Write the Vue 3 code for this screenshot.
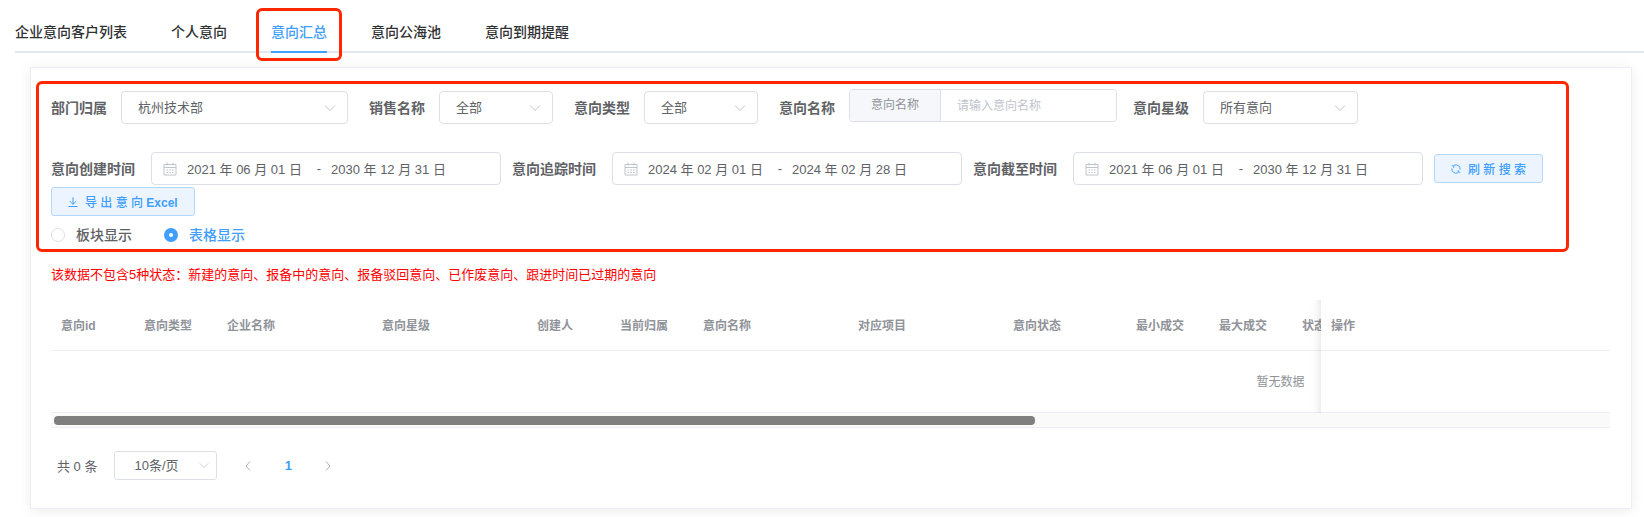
<script setup>
import { ref } from 'vue'

const tabs = ['企业意向客户列表', '个人意向', '意向汇总', '意向公海池', '意向到期提醒']
const activeTab = ref('意向汇总')

const selects = [
  { id: 'dept', label: '部门归属', value: '杭州技术部', size: 'wide' },
  { id: 'sales', label: '销售名称', value: '全部', size: 'narrow' },
  { id: 'type', label: '意向类型', value: '全部', size: 'narrow' }
]

const ranges = ref([
  { id: 'created', label: '意向创建时间', from: '2021 年 06 月 01 日', to: '2030 年 12 月 31 日' },
  { id: 'tracked', label: '意向追踪时间', from: '2024 年 02 月 01 日', to: '2024 年 02 月 28 日' },
  { id: 'deadline', label: '意向截至时间', from: '2021 年 06 月 01 日', to: '2030 年 12 月 31 日' }
])

const name = ref('')
const view = ref('table')

const columns = [
  { title: '意向id', size: 's' },
  { title: '意向类型', size: 's' },
  { title: '企业名称', size: 'l' },
  { title: '意向星级', size: 'l' },
  { title: '创建人', size: 's' },
  { title: '当前归属', size: 's' },
  { title: '意向名称', size: 'l' },
  { title: '对应项目', size: 'l' },
  { title: '意向状态', size: 'm' },
  { title: '最小成交', size: 's' },
  { title: '最大成交', size: 's' },
  { title: '状态', size: 's' }
]
</script>

<template>
  <div class="page">
    <nav class="tabs">
      <a
        v-for="t in tabs"
        :key="t"
        href="#"
        class="tab"
        :class="{ active: t === activeTab }"
        @click.prevent="activeTab = t"
      >{{ t }}<span v-if="t === '意向汇总'" class="mark"></span></a>
    </nav>

    <main class="card">
      <section class="filters">
        <div class="row first">
          <div v-for="s in selects" :key="s.id" class="field spaced">
            <label :for="s.id">{{ s.label }}</label>
            <div class="select" :class="s.size">
              <select :id="s.id"><option>{{ s.value }}</option></select>
              <svg class="arrow" width="12" height="8" viewBox="0 0 12 8"><path d="M1 1.5 6 6.5 11 1.5" /></svg>
            </div>
          </div>
          <div class="field">
            <label for="name">意向名称</label>
            <div class="group">
              <span class="prepend">意向名称</span>
              <input id="name" v-model="name" type="text" placeholder="请输入意向名称">
            </div>
          </div>
          <div class="field">
            <label for="star">意向星级</label>
            <div class="select medium">
              <select id="star"><option>所有意向</option></select>
              <svg class="arrow" width="12" height="8" viewBox="0 0 12 8"><path d="M1 1.5 6 6.5 11 1.5" /></svg>
            </div>
          </div>
        </div>

        <div class="row second">
          <div v-for="r in ranges" :key="r.id" class="field range-field">
            <label :for="r.id">{{ r.label }}</label>
            <div class="range">
              <svg class="calendar" width="14" height="14" viewBox="0 0 14 14">
                <path d="M1 2.5h12v10.5H1zM1 5.5h12M4 .5v3M10 .5v3" />
                <path d="M3.5 8h1.5M6.3 8h1.5M9 8h1.5M3.5 10.5h1.5M6.3 10.5h1.5M9 10.5h1.5" />
              </svg>
              <input :id="r.id" v-model="r.from" type="text">
              <span class="dash">-</span>
              <input v-model="r.to" type="text" :aria-label="r.label">
            </div>
          </div>
          <button type="button" class="btn">
            <svg width="10" height="10" viewBox="0 0 10 10">
              <path d="M3.2 1.2A4.2 4.2 0 0 1 9.1 5.6M6.8 8.8A4.2 4.2 0 0 1 .9 4.4M.8 1.8h2v2M9.2 8.2h-2v-2" />
            </svg>
            刷 新 搜 索
          </button>
          <button type="button" class="btn">
            <svg width="10" height="10" viewBox="0 0 10 10">
              <path d="M5 .3v7M1.8 4.2 5 7.3 8.2 4.2M.5 9.5h9" />
            </svg>
            <span>导 出 意 向 <b>Excel</b></span>
          </button>
        </div>

        <div class="views">
          <label class="radio" :class="{ on: view === 'board' }">
            <input v-model="view" type="radio" name="view" value="board">板块显示
          </label>
          <label class="radio" :class="{ on: view === 'table' }">
            <input v-model="view" type="radio" name="view" value="table">表格显示
          </label>
        </div>
      </section>

      <div class="body">
        <p class="notice">该数据不包含5种状态：新建的意向、报备中的意向、报备驳回意向、已作废意向、跟进时间已过期的意向</p>

        <div class="table-wrap">
          <table>
            <colgroup>
              <col v-for="c in columns" :key="c.title" :class="'col-' + c.size">
              <col>
              <col class="col-fixed">
            </colgroup>
            <thead>
              <tr>
                <th v-for="c in columns" :key="c.title">{{ c.title }}</th>
                <th></th>
                <th class="fixed">操作</th>
              </tr>
            </thead>
            <tbody>
              <tr>
                <td class="empty" :colspan="columns.length + 1">暂无数据</td>
                <td class="fixed"></td>
              </tr>
            </tbody>
          </table>
        </div>
        <div class="track"><div class="thumb"></div></div>

        <footer class="pager">
          <span>共 0 条</span>
          <div class="select page-size">
            <select aria-label="每页条数"><option>10条/页</option></select>
            <svg class="arrow" width="10" height="7" viewBox="0 0 12 8"><path d="M1 1.5 6 6.5 11 1.5" /></svg>
          </div>
          <div class="pages">
            <button type="button" aria-label="上一页">
              <svg width="8" height="12" viewBox="0 0 8 12"><path d="M6 1.5 2 6 6 10.5" /></svg>
            </button>
            <button type="button" class="current">1</button>
            <button type="button" aria-label="下一页">
              <svg width="8" height="12" viewBox="0 0 8 12"><path d="M2 1.5 6 6 2 10.5" /></svg>
            </button>
          </div>
        </footer>
      </div>
    </main>
  </div>
</template>

<style>
body {
  background: #fff;
}
</style>

<style scoped>
.page {
  font-family: "Liberation Sans", "Noto Sans CJK SC", sans-serif;
  font-size: 13px;
  color: #606266;
  overflow: hidden;
  padding-bottom: 8px;
}
.page * {
  box-sizing: border-box;
}
svg {
  fill: none;
  stroke: currentColor;
}
input,
select,
button {
  font: inherit;
  color: inherit;
  margin: 0;
}

.tabs {
  display: flex;
  gap: 44px;
  margin-left: 15px;
  padding-top: 13px;
  border-bottom: 2px solid #e4e7ed;
}
.tab {
  position: relative;
  font-size: 14px;
  font-weight: 500;
  line-height: 38px;
  color: #303133;
  text-decoration: none;
  white-space: nowrap;
}
.tab.active {
  color: #409eff;
}
.tab.active::after {
  content: "";
  position: absolute;
  left: 0;
  right: 0;
  bottom: -2px;
  height: 2px;
  background: #409eff;
}
.mark {
  position: absolute;
  inset: -5px -15px -10px;
  border: 3px solid #ff2600;
  border-radius: 6px;
}

.card {
  margin: 14px 12px 0 30px;
  padding: 13px 0 28px;
  border: 1px solid #ebeef5;
  box-shadow: 0 2px 12px rgba(0, 0, 0, 0.07);
}
.filters {
  margin: 0 62px 0 5px;
  padding: 5px 12px 4px;
  border: 3px solid #ff2600;
  border-radius: 6px;
}
.row {
  display: flex;
  flex-wrap: wrap;
  align-items: center;
}
.first {
  column-gap: 16px;
  margin-bottom: 26px;
}
.second {
  gap: 2px 11px;
}
.field {
  display: flex;
  align-items: center;
  gap: 14px;
}
.range-field {
  gap: 16px;
}
.spaced {
  margin-right: 5px;
}
.field > label {
  font-size: 14px;
  font-weight: 700;
  line-height: 20px;
  white-space: nowrap;
}

.select {
  display: grid;
  align-items: center;
  height: 33px;
}
.select > * {
  grid-area: 1 / 1;
}
.select select {
  appearance: none;
  width: 100%;
  height: 100%;
  padding: 0 30px 0 16px;
  border: 1px solid #dcdfe6;
  border-radius: 4px;
  background: #fff;
}
.arrow {
  justify-self: end;
  margin-right: 12px;
  color: #c0c4cc;
  pointer-events: none;
}
.wide {
  width: 227px;
}
.medium {
  width: 155px;
}
.narrow {
  width: 114px;
}

.group {
  display: flex;
  width: 268px;
  height: 33px;
  margin-bottom: 4px;
  border: 1px solid #dcdfe6;
  border-radius: 4px;
  overflow: hidden;
  font-size: 12px;
}
.prepend {
  padding: 0 21px;
  border-right: 1px solid #dcdfe6;
  background: #f5f7fa;
  color: #909399;
  line-height: 31px;
}
.group input {
  flex: 1;
  min-width: 0;
  padding: 0 16px;
  border: 0;
  background: #fff;
}
.group input::placeholder {
  color: #c0c4cc;
}

.range {
  display: flex;
  align-items: center;
  width: 350px;
  height: 33px;
  padding-left: 11px;
  border: 1px solid #dcdfe6;
  border-radius: 4px;
}
.calendar {
  margin-right: 10px;
  color: #c0c4cc;
}
.range input {
  width: 120px;
  padding: 0;
  border: 0;
  background: none;
}
.dash {
  width: 24px;
  text-align: center;
}

.btn {
  display: flex;
  align-items: center;
  gap: 7px;
  height: 29px;
  padding: 0 16px;
  border: 1px solid #b3d8ff;
  border-radius: 3px;
  background: #ecf5ff;
  color: #409eff;
  font-size: 12px;
  font-weight: 500;
}

.views {
  display: flex;
  gap: 32px;
  margin-top: 9px;
}
.radio {
  display: flex;
  align-items: center;
  gap: 11px;
  font-size: 14px;
  font-weight: 500;
  line-height: 20px;
}
.radio input {
  appearance: none;
  width: 14px;
  height: 14px;
  border: 1px solid #dcdfe6;
  border-radius: 50%;
  background: #fff;
}
.radio input:checked {
  border: 5px solid #409eff;
}
.radio.on {
  color: #409eff;
}

.body {
  margin: 13px 21px 0 20px;
}
.notice {
  margin: 0 0 15px;
  line-height: 20px;
  color: #f00;
}

.table-wrap {
  overflow: hidden;
}
table {
  width: 2459px;
  table-layout: fixed;
  border-collapse: separate;
  border-spacing: 0;
  font-size: 12px;
  color: #909399;
}
.col-s {
  width: 83px;
}
.col-m {
  width: 123px;
}
.col-l {
  width: 155px;
}
.col-fixed {
  width: 289px;
}
th {
  height: 51px;
  padding: 0 10px 2px;
  border-bottom: 1px solid #ebeef5;
  text-align: left;
  font-weight: 700;
  white-space: nowrap;
}
td {
  height: 62px;
  padding: 0 0 2px;
  border-bottom: 1px solid #ebeef5;
}
.empty {
  padding-left: 289px;
  text-align: center;
}
.fixed {
  position: sticky;
  right: 0;
  background: #fff;
}
.fixed::before {
  content: "";
  position: absolute;
  top: 0;
  bottom: -1px;
  left: -10px;
  width: 10px;
  background: linear-gradient(to left, rgba(0, 0, 0, 0.07), rgba(0, 0, 0, 0.02) 50%, transparent);
}
.track {
  height: 15px;
  padding: 3px;
  border-bottom: 1px solid #ebeef5;
  background: #fafafa;
}
.thumb {
  width: 63.2%;
  height: 9px;
  border-radius: 4px;
  background: #7f7f7f;
}

.pager {
  display: flex;
  align-items: center;
  margin-top: 23px;
  padding-left: 6px;
}
.page-size {
  width: 103px;
  height: 29px;
  margin-left: 17px;
}
.page-size select {
  padding: 0 24px 0 19px;
  border-radius: 3px;
}
.page-size .arrow {
  margin-right: 8px;
}
.pages {
  display: flex;
  gap: 10px;
  margin-left: 16px;
}
.pages button {
  display: grid;
  place-items: center;
  width: 30px;
  height: 29px;
  padding: 0;
  border: 0;
  background: none;
  color: #b0b3ba;
}
.pages .current {
  color: #409eff;
  font-weight: 700;
}
</style>
